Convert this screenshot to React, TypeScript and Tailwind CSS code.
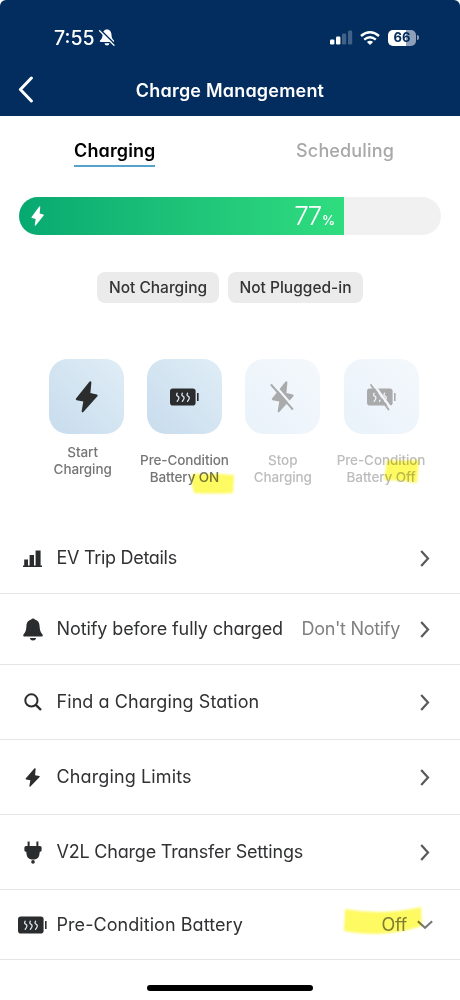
import React, { useState } from 'react';
import clsx from 'clsx';

const BOLT = 'M14.6 0.6 L1 17.6 Q0.3 18.8 1.7 19.2 L8.3 20.6 L6.6 30.6 Q7.2 32 8.3 31 L22.4 15.2 Q23.2 13.9 21.8 13.4 L15.4 12 L16.4 1.2 Q15.7 -0.3 14.6 0.6 Z';

const Bolt: React.FC<{ className?: string }> = ({ className }) => (
  <svg viewBox="0 0 23 32" className={className} fill="currentColor" preserveAspectRatio="none">
    <path d={BOLT} />
  </svg>
);

const BoltOff: React.FC = () => (
  <svg viewBox="0 0 23 32" className="w-[23px] h-8 text-[#a9aaab] overflow-visible" fill="currentColor">
    <path d={BOLT} />
    <path d="M1.6 1.8 L23.5 27" stroke="#f1f6fb" strokeWidth="2.2" />
    <path d="M0.4 4 L21.4 28" stroke="currentColor" strokeWidth="1.9" strokeLinecap="round" />
  </svg>
);

const HeatBattery: React.FC<{ off?: boolean; wave?: string }> = ({ off, wave = '#dce9f3' }) => (
  <svg viewBox="0 0 29 18" className={clsx('w-[29px] h-[18px] overflow-visible', off ? 'text-[#a9aaab]' : 'text-[#2b2c2e]')} fill="none">
    <rect x="0" y="0.5" width="25.6" height="17" rx="2.8" fill="currentColor" />
    <path d="M27.8 5 V13" stroke="currentColor" strokeWidth="1.6" />
    {[6.2, 11.4, 16.6].map(x => (
      <path
        key={x}
        transform={`translate(${x} 5)`}
        d="M1 0.2 C-0.2 2 0.6 2.8 1.8 3.4 C3.2 4.2 3 6 1 8.2"
        stroke={wave}
        strokeWidth="1.3"
        strokeLinecap="round"
      />
    ))}
    {off && (
      <>
        <path d="M6 -4.5 L24.5 21" stroke="#f1f6fb" strokeWidth="2.4" />
        <path d="M4 -3 L21.5 21.5" stroke="currentColor" strokeWidth="1.8" strokeLinecap="round" />
      </>
    )}
  </svg>
);

const Chevron: React.FC = () => (
  <svg viewBox="0 0 10 17" className="w-[10px] h-[17px]" fill="none" stroke="#58595b" strokeWidth="2.2">
    <path d="M1.2 1 L8 8.5 L1.2 16" />
  </svg>
);

const StatusBar: React.FC = () => (
  <div className="h-[64px] pt-[11px] pl-[54px] pr-[41px] flex items-center text-white">
    <span className="text-[19.5px] font-medium leading-6">7:55</span>
    <svg viewBox="0 0 16 17" className="w-4 h-[17px] ml-[4px]" fill="#fff">
      <path d="M8 0.6 C4.8 0.6 3.6 3.2 3.5 6 C3.4 9 2.6 10 1 11.6 Q0.4 12.8 1.6 13 H14.4 Q15.6 12.8 15 11.6 C13.4 10 12.6 9 12.5 6 C12.4 3.2 11.2 0.6 8 0.6 Z M5.5 14.2 H10.5 Q10.2 16.6 8 16.6 Q5.8 16.6 5.5 14.2 Z" />
      <path d="M1.4 0.9 L16.2 15.5" stroke="#022d5e" strokeWidth="1.6" />
      <path d="M0.6 1.8 L15 16.2" stroke="#fff" strokeWidth="1.3" strokeLinecap="round" />
    </svg>
    <div className="flex-1" />
    <svg viewBox="0 0 23 15" className="w-[23px] h-[15px]" fill="#fff">
      <rect x="0" y="9.5" width="4.4" height="5" rx="1.2" />
      <rect x="6" y="6.6" width="4.4" height="7.9" rx="1.2" />
      <rect x="12" y="3.6" width="4.2" height="10.9" rx="1.2" opacity="0.25" />
      <rect x="18" y="0.6" width="4.2" height="13.9" rx="1.2" opacity="0.25" />
    </svg>
    <svg viewBox="0 0 20 14" className="w-5 h-[14px] ml-[7px]" fill="none" stroke="#fff" strokeWidth="2.5">
      <path d="M1 5 Q10 -2.4 19 5" />
      <path d="M4.2 8.6 Q10 3.8 15.8 8.6" />
      <path d="M6.9 10.9 Q10 8.4 13.1 10.9 L10 14 Z" fill="#fff" stroke="none" />
    </svg>
    <div className="ml-[8px] w-[28px] h-4 rounded-[5px] bg-linear-to-r from-white from-66% to-[#8e9fb9] to-66% flex items-center justify-center text-[13px] font-bold text-[#022d5e] leading-none">
      66
    </div>
    <div className="ml-px w-[2px] h-[5px] rounded-r bg-[#8e9fb9]" />
  </div>
);

const actions = [
  { id: 'start', lines: ['Start', 'Charging'], icon: <Bolt className="w-[23px] h-8 text-[#2b2c2e]" />, disabled: false, pad: 'pt-[10px] pr-[7px]' },
  { id: 'heat-on', lines: ['Pre-Condition', 'Battery ON'], icon: <HeatBattery />, disabled: false, pad: 'pt-[18px]' },
  { id: 'stop', lines: ['Stop', 'Charging'], icon: <BoltOff />, disabled: true, pad: 'pt-[18px]' },
  { id: 'heat-off', lines: ['Pre-Condition', 'Battery Off'], icon: <HeatBattery off wave="#f1f6fb" />, disabled: true, pad: 'pt-[18px]' },
];

const rows = [
  {
    label: 'EV Trip Details',
    height: 'h-[71px]',
    spacing: 'tracking-[-0.3px]',
    icon: (
      <svg viewBox="0 0 19 17" className="w-[19px] h-[17px]" fill="#2b2c2e">
        <path d="M0 15.4 H19 V17 H0 Z M1.2 9.5 H5 V16 H1.2 Z M6.6 5 H11 V16 H6.6 Z M12.6 0.5 H17.6 V16 H12.6 Z" />
      </svg>
    ),
  },
  {
    label: 'Notify before fully charged',
    value: "Don't Notify",
    height: 'h-[71px]',
    spacing: 'tracking-[-0.1px]',
    icon: (
      <svg viewBox="0 0 20 23" className="w-5 h-[23px]" fill="#2b2c2e">
        <path d="M10 0.4 Q11.5 0.4 12 1.8 C15.4 2.6 16.4 5 16.6 8.4 C16.8 12.4 17.5 14 19.4 16.2 Q20.4 18.4 18.6 18.6 H1.4 Q-0.4 18.4 0.6 16.2 C2.5 14 3.2 12.4 3.4 8.4 C3.6 5 4.6 2.6 8 1.8 Q8.5 0.4 10 0.4 Z M6.8 20 H13.2 Q12.6 22.6 10 22.6 Q7.4 22.6 6.8 20 Z" />
      </svg>
    ),
  },
  {
    label: 'Find a Charging Station',
    height: 'h-[75px]',
    spacing: 'tracking-[0.07px]',
    icon: (
      <svg viewBox="0 0 18 18" className="w-[18px] h-[18px]" fill="none" stroke="#2b2c2e" strokeWidth="2">
        <circle cx="7.4" cy="7.4" r="6.1" />
        <path d="M11.8 11.8 L17 17" strokeWidth="2.4" />
      </svg>
    ),
  },
  { label: 'Charging Limits', height: 'h-[75px]', spacing: 'tracking-[0.12px]', icon: <Bolt className="w-[15px] h-[19px] text-[#2b2c2e]" /> },
  {
    label: 'V2L Charge Transfer Settings',
    height: 'h-[75px]',
    spacing: 'tracking-[-0.2px]',
    icon: (
      <svg viewBox="0 0 18 23" className="w-[18px] h-[23px]" fill="#2b2c2e">
        <path d="M3.6 0.5 H5.6 V5 H12.4 V0.5 H14.4 V5 H16 Q17.6 5 17.6 6.6 V9.4 Q17.4 10.6 15.8 10.8 L15.2 14.6 Q14 18.4 10.6 18.4 H7.4 Q4 18.4 2.8 14.6 L2.2 10.8 Q0.6 10.6 0.4 9.4 V6.6 Q0.4 5 2 5 H3.6 Z" />
        <circle cx="9" cy="20.9" r="1.8" />
      </svg>
    ),
  },
  { label: 'Pre-Condition Battery', value: 'Off', height: 'h-[70px]', spacing: 'tracking-[0.06px]', icon: <HeatBattery />, expandable: true },
];

const App: React.FC = () => {
  const [tab, setTab] = useState('charging');
  const level = 77;

  return (
    <div className="relative w-[460px] h-[1000px] overflow-hidden bg-white font-['Inter',sans-serif]">
      <header className="h-[116px] bg-[#022d5e] rounded-t-[6px]">
        <StatusBar />
        <div className="relative h-[52px] pt-[2px] flex items-center justify-center">
          <button className="absolute left-[18px] top-[12px]" aria-label="Back">
            <svg viewBox="0 0 16 27" className="w-4 h-[27px]" fill="none" stroke="#fff" strokeWidth="3" strokeLinecap="round" strokeLinejoin="round">
              <path d="M13.4 2 L2.4 13.5 L13.4 25" />
            </svg>
          </button>
          <h1 className="text-[18px] font-semibold text-white leading-6 tracking-[0.2px] [font-feature-settings:'cv11']">Charge Management</h1>
        </div>
      </header>

      {/* Tabs */}
      <nav className="h-[51px] pl-[74px] pr-[66px] flex justify-between items-end text-[18px] leading-6">
        <button
          onClick={() => setTab('charging')}
          className={clsx("h-[28px] flex font-semibold [font-feature-settings:'cv11'] tracking-[0.12px]", tab === 'charging' ? 'text-black border-b-2 border-[#55a2cb]' : 'text-[#a8a8a8]')}
        >
          Charging
        </button>
        <button
          onClick={() => setTab('scheduling')}
          className={clsx('h-[28px] flex font-medium tracking-[0.15px]', tab === 'scheduling' ? 'text-black border-b-2 border-[#55a2cb]' : 'text-[#a8a8a8]')}
        >
          Scheduling
        </button>
      </nav>

      {/* Battery level */}
      <div className="mt-[30px] ml-[19px] w-[422px] h-[38px] rounded-full bg-[#f1f1f1] overflow-hidden">
        <div className="h-full bg-linear-to-r from-[#06a971] to-[#2fdd7f] flex items-center justify-between pl-[12px] pr-[9px] text-white" style={{ width: `${level}%` }}>
          <Bolt className="w-[13px] h-5" />
          <div className="flex items-baseline leading-none">
            <span className="text-[26px] font-light tracking-[-1.5px]">{level}</span>
            <span className="text-[13px] font-semibold ml-px">%</span>
          </div>
        </div>
      </div>

      <div className="mt-[37px] ml-[97px] flex gap-[9px] text-[15.5px] font-medium text-[#333]">
        <div className="w-[122px] h-[31px] rounded-lg bg-[#ebebeb] flex items-center justify-center whitespace-nowrap">Not Charging</div>
        <div className="w-[135px] h-[31px] rounded-lg bg-[#ebebeb] flex items-center justify-center whitespace-nowrap">Not Plugged-in</div>
      </div>

      {/* Quick actions */}
      <div className="mt-[56px] ml-[37px] h-[164px] flex">
        {actions.map(a => (
          <div key={a.id} className="w-[98.3px] shrink-0 flex flex-col items-center">
            <div className={clsx('w-[75px] h-[75px] shrink-0 rounded-[19px] flex items-center justify-center bg-linear-to-tr', a.disabled ? 'from-[#e9f2fa] to-[#f4f8fc]' : 'from-[#c8dced] to-[#dfedf6]')}>
              {a.icon}
            </div>
            <div className={clsx('text-center text-[13.5px] leading-[17px] font-medium tracking-[-0.1px] whitespace-nowrap', a.pad, a.disabled ? 'text-[#bcbcbc]' : 'text-[#757575]')}>
              {a.lines[0]}<br />{a.lines[1]}
            </div>
          </div>
        ))}
      </div>

      <ul>
        {rows.map(r => (
          <li key={r.label} className={clsx('flex items-center border-b border-[#e6e6e6] pr-[30px]', r.height)}>
            <span className="w-[29px] ml-[18px] shrink-0 flex justify-center">{r.icon}</span>
            <span className={clsx("ml-[9.5px] text-[18px] leading-6 text-[#303133] whitespace-nowrap [font-feature-settings:'cv11']", r.spacing)}>{r.label}</span>
            <span className="ml-auto text-[18px] leading-6 tracking-[-0.3px] text-[#808080]">{r.value}</span>
            {r.expandable ? (
              <svg viewBox="0 0 16 10" className="w-4 h-[10px] ml-[10px] -mr-[3px]" fill="none" stroke="#777" strokeWidth="2">
                <path d="M0.8 1.2 L8 7.8 L15.2 1.2" />
              </svg>
            ) : (
              <span className="ml-[20px]"><Chevron /></span>
            )}
          </li>
        ))}
      </ul>

      {/* Marker strokes */}
      <svg className="absolute left-[190px] top-[471px] w-[46px] h-6 mix-blend-multiply blur-[0.8px]" viewBox="0 0 46 24" fill="#fefa62">
        <path d="M2 3 Q22 2 44 4 L43 22 Q24 23 4 22 Q1 12 2 3 Z" />
      </svg>
      <svg className="absolute left-[382px] top-[458px] w-[38px] h-[26px] mix-blend-multiply blur-[0.8px]" viewBox="0 0 38 26" fill="#fefa62">
        <path d="M5 2 Q20 3 37 2 L35 25 Q17 22 2 22 Z" />
      </svg>
      <svg className="absolute left-[342px] top-[905px] w-[82px] h-[31px] mix-blend-multiply blur-[0.8px]" viewBox="0 0 82 31" fill="#fefa62">
        <path d="M3 4 Q40 11 79 2 L80 21 Q40 34 2 26 Z" />
      </svg>

      <div className="absolute left-[147px] bottom-[9px] w-[166px] h-[6px] rounded-full bg-black" />
    </div>
  );
};

export default App;
